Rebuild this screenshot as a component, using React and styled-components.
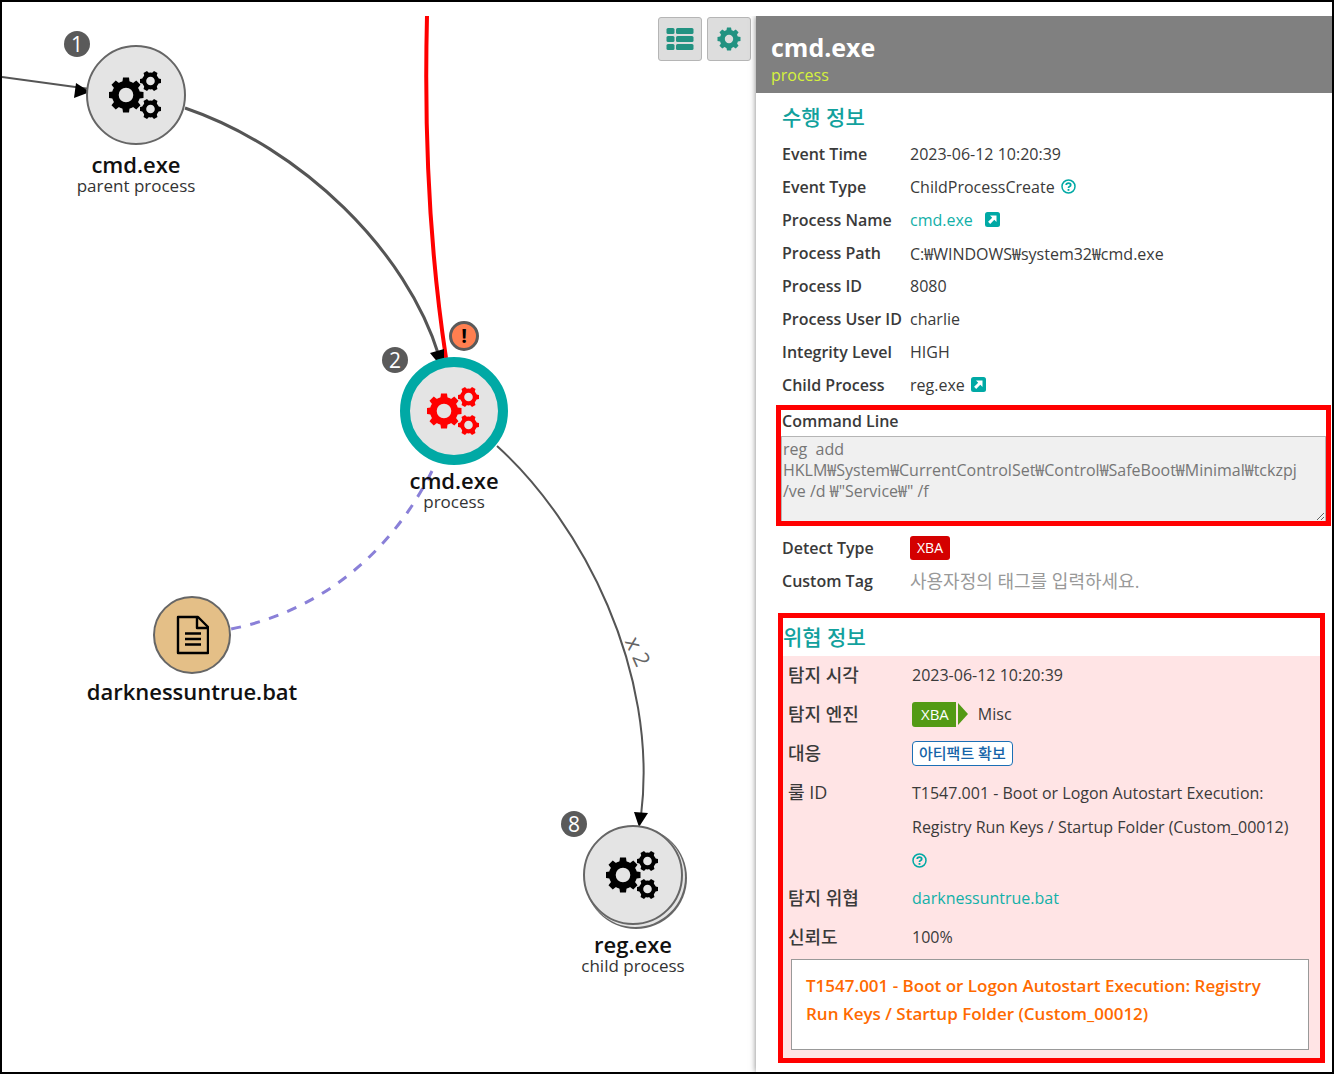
import styled, { createGlobalStyle } from "styled-components";

const sans = "'Open Sans', 'Noto Sans CJK KR', sans-serif";

const GlobalStyle = createGlobalStyle`
    * {
        box-sizing: border-box;
    }

    body {
        margin: 0;
        background: #fff;
        font-family: ${sans};
        color: #3a3a3a;
    }
`;

const Gear = ({ x, y, r, hole, teeth, tooth }) => (
    <g transform={`translate(${x} ${y})`}>
        <circle r={(r * 0.8 + hole) / 2} fill="none" stroke="currentColor" strokeWidth={r * 0.8 - hole} />
        {Array.from({ length: teeth }, (_, i) => (
            <path
                key={i}
                transform={`rotate(${(360 / teeth) * i + 90})`}
                fill="currentColor"
                d={`M${-tooth / 2 - 0.8} ${-r * 0.66}L${-tooth / 2} ${-r}H${tooth / 2}L${tooth / 2 + 0.8} ${-r * 0.66}Z`}
            />
        ))}
    </g>
);

const CogsIcon = () => (
    <svg width="54" height="50" viewBox="1 0 54 50" aria-hidden="true">
        <Gear x={18} y={25} r={17.5} hole={7.3} teeth={8} tooth={6} />
        <Gear x={42.5} y={11} r={10.5} hole={4.3} teeth={6} tooth={4} />
        <Gear x={42.5} y={39} r={10.5} hole={4.3} teeth={6} tooth={4} />
    </svg>
);

const CogIcon = () => (
    <svg width="24" height="24" viewBox="0 0 24 24" aria-hidden="true">
        <Gear x={12} y={12} r={11.5} hole={4.2} teeth={8} tooth={4} />
    </svg>
);

const ListIcon = () => (
    <svg width="28" height="24" viewBox="0 0 28 24" fill="currentColor" aria-hidden="true">
        {[1, 9, 17].map((y) => (
            <g key={y}>
                <rect x="0.500" y={y} width="8" height="6" rx="1.500" />
                <rect x="10" y={y} width="17.500" height="6" rx="1.500" />
            </g>
        ))}
    </svg>
);

const FileIcon = () => (
    <svg width="34" height="40" viewBox="-1 0 34 40" fill="none" stroke="#000" strokeWidth="2.4" strokeLinejoin="round" aria-hidden="true">
        <path d="M2 2H22L32 12V38H2Z" />
        <path d="M21 2V13H32" />
        <path d="M9 18.500H25M9 24H25M9 29.500H25" />
    </svg>
);

const HelpIcon = () => (
    <svg width="15" height="15" viewBox="0 0 15 15" fill="none" stroke="currentColor" aria-hidden="true">
        <circle cx="7.500" cy="7.500" r="6.500" strokeWidth="1.500" />
        <path d="M5.200 6Q5.300 4.200 7.500 4.200Q9.700 4.200 9.700 5.900Q9.700 6.900 8.500 7.500Q7.500 8 7.500 9" strokeWidth="1.800" />
        <path d="M7.500 10V11.800" strokeWidth="1.800" />
    </svg>
);

const ExternalIcon = () => (
    <svg width="15" height="15" viewBox="0 0 15 15" aria-hidden="true">
        <rect width="15" height="15" rx="2.500" fill="#00a9a5" />
        <path d="M5 3.500H11.500V10L9.300 7.800L5.200 11.900L3.100 9.800L7.200 5.700Z" fill="#fff" />
    </svg>
);

const nodes = [
    { id: 1, x: 134, y: 79, name: "cmd.exe", kind: "parent process", order: 1 },
    { id: 2, x: 452, y: 395, name: "cmd.exe", kind: "process", order: 2, selected: true, alert: true },
    { id: 3, x: 190, y: 619, name: "darknessuntrue.bat", file: true },
    { id: 4, x: 631, y: 859, name: "reg.exe", kind: "child process", order: 8, stacked: true },
];

const eventInfo = [
    { label: "Event Time", value: "2023-06-12 10:20:39" },
    { label: "Event Type", value: "ChildProcessCreate", help: true },
    { label: "Process Name", value: "cmd.exe", link: true, external: true },
    { label: "Process Path", value: "C:₩WINDOWS₩system32₩cmd.exe" },
    { label: "Process ID", value: "8080" },
    { label: "Process User ID", value: "charlie" },
    { label: "Integrity Level", value: "HIGH" },
    { label: "Child Process", value: "reg.exe", external: true },
];

const commandLine = 'reg  add HKLM₩System₩CurrentControlSet₩Control₩SafeBoot₩Minimal₩tckzpj /ve /d ₩"Service₩" /f';

const Edges = () => (
    <EdgeLayer aria-hidden="true">
        <g fill="none" stroke="#555" strokeWidth="2">
            <path d="M0 61L88 73" />
            <path d="M183 92C300 132 405 235 437 340" strokeWidth="3" />
            <path d="M495 430C580 507 657 655 639 800" />
        </g>
        <path d="M425 0C422 120 427 230 444 342" fill="none" stroke="red" strokeWidth="4" />
        <path d="M430 455C385 545 310 597 229 613" fill="none" stroke="#8a80d8" strokeWidth="3" strokeDasharray="10 9.6" />
        <g fill="#000">
            <path d="M74 67L88 76L72 82Z" />
            <path d="M428 337L442 333V348H437Z" />
            <path d="M632 796L646 797L637 811Z" />
        </g>
    </EdgeLayer>
);

const GraphNode = ({ node }) => (
    <NodeBox style={{ left: node.x, top: node.y }}>
        <Circle $file={node.file} $selected={node.selected} $stacked={node.stacked}>
            {node.file ? <FileIcon /> : <CogsIcon />}
            {node.order && <OrderBadge $selected={node.selected}>{node.order}</OrderBadge>}
            {node.alert && <AlertBadge>!</AlertBadge>}
        </Circle>
        <NodeText $file={node.file}>
            <NodeName>{node.name}</NodeName>
            {node.kind && <NodeKind>{node.kind}</NodeKind>}
        </NodeText>
    </NodeBox>
);

export default function App() {
    return (
        <>
            <GlobalStyle />
            <Frame>
                <Graph>
                    <Edges />
                    {nodes.map((node) => (
                        <GraphNode key={node.id} node={node} />
                    ))}
                    <EdgeLabel>x 2</EdgeLabel>
                    <Toolbar>
                        <ToolButton aria-label="List"><ListIcon /></ToolButton>
                        <ToolButton aria-label="Settings"><CogIcon /></ToolButton>
                    </Toolbar>
                </Graph>
                <Panel>
                    <PanelHeader>
                        <PanelTitle>cmd.exe</PanelTitle>
                        <PanelKind>process</PanelKind>
                    </PanelHeader>
                    <EventSection>
                        <SectionTitle>수행 정보</SectionTitle>
                        <InfoList>
                            {eventInfo.map(({ label, value, link, help, external }) => (
                                <InfoRow key={label}>
                                    <InfoLabel>{label}</InfoLabel>
                                    <InfoValue $gap={link ? 12 : 6}>
                                        {link ? <TextLink href="#process">{value}</TextLink> : value}
                                        {help && <IconButton aria-label="Help"><HelpIcon /></IconButton>}
                                        {external && <IconButton aria-label="Open"><ExternalIcon /></IconButton>}
                                    </InfoValue>
                                </InfoRow>
                            ))}
                        </InfoList>
                    </EventSection>
                    <CommandBox>
                        <CommandLabel htmlFor="command">Command Line</CommandLabel>
                        <CommandText id="command" readOnly defaultValue={commandLine} />
                    </CommandBox>
                    <TagSection>
                        <InfoRow as="div">
                            <TagLabel as="span">Detect Type</TagLabel>
                            <DetectBadge>XBA</DetectBadge>
                        </InfoRow>
                        <InfoRow as="div">
                            <TagLabel htmlFor="tag">Custom Tag</TagLabel>
                            <TagInput id="tag" placeholder="사용자정의 태그를 입력하세요." />
                        </InfoRow>
                    </TagSection>
                    <ThreatBox>
                        <ThreatTitle>위협 정보</ThreatTitle>
                        <ThreatBody>
                            <ThreatList>
                                <ThreatLabel>탐지 시각</ThreatLabel>
                                <ThreatValue>2023-06-12 10:20:39</ThreatValue>
                                <ThreatLabel>탐지 엔진</ThreatLabel>
                                <ThreatValue><EngineBadge>XBA</EngineBadge>Misc</ThreatValue>
                                <ThreatLabel>대응</ThreatLabel>
                                <ThreatValue><ArtifactButton>아티팩트 확보</ArtifactButton></ThreatValue>
                                <ThreatLabel>룰 ID</ThreatLabel>
                                <RuleValue>
                                    T1547.001 - Boot or Logon Autostart Execution: Registry Run Keys / Startup Folder (Custom_00012)
                                    <RuleHelp><IconButton aria-label="Help"><HelpIcon /></IconButton></RuleHelp>
                                </RuleValue>
                                <ThreatLabel>탐지 위협</ThreatLabel>
                                <ThreatValue><TextLink href="#threat">darknessuntrue.bat</TextLink></ThreatValue>
                                <ThreatLabel>신뢰도</ThreatLabel>
                                <ThreatValue>100%</ThreatValue>
                            </ThreatList>
                            <RuleCard>
                                T1547.001 - Boot or Logon Autostart Execution: Registry Run Keys / Startup Folder (Custom_00012)
                            </RuleCard>
                        </ThreatBody>
                    </ThreatBox>
                </Panel>
            </Frame>
        </>
    );
}

const Frame = styled.main`
    display: flex;
    min-height: 100vh;
    padding-top: 14px;
    border: 2px solid #000;
`;

const Graph = styled.section`
    position: relative;
    flex: 1;
    min-width: 0;
    overflow: hidden;
`;

const EdgeLayer = styled.svg`
    position: absolute;
    inset: 0;
    width: 100%;
    height: 100%;
`;

const NodeBox = styled.div`
    position: absolute;
    width: 0;
    height: 0;
    display: flex;
    justify-content: center;
`;

const Circle = styled.div`
    position: absolute;
    display: flex;
    align-items: center;
    justify-content: center;
    width: ${props => props.$file ? 78 : props.$selected ? 108 : 100}px;
    height: ${props => props.$file ? 78 : props.$selected ? 108 : 100}px;
    transform: translate(0, -50%);
    border-radius: 50%;
    border: ${props => props.$selected ? "10px solid #00a9a5" : "2px solid #666"};
    background: ${props => props.$file ? "#e4bf87" : "#e4e4e4"};
    color: ${props => props.$selected ? "red" : "#000"};
    box-shadow: ${props => props.$stacked ? "2px 2px 0 0 #e4e4e4, 3px 3px 0 1px #666" : "none"};
`;

const Badge = styled.span`
    position: absolute;
    display: flex;
    align-items: center;
    justify-content: center;
    border-radius: 50%;
    line-height: 1;
`;

const OrderBadge = styled(Badge)`
    top: ${props => props.$selected ? -20 : -16}px;
    left: ${props => props.$selected ? -28 : -24}px;
    width: 26px;
    height: 26px;
    background: #5a5a5a;
    color: #fff;
    font-size: 21px;
`;

const AlertBadge = styled(Badge)`
    top: -46px;
    right: 19px;
    width: 30px;
    height: 30px;
    border: 3px solid #5a5a5a;
    background: #ff7f50;
    color: #000;
    font-size: 20px;
    font-weight: bold;
`;

const NodeText = styled.div`
    position: absolute;
    top: ${props => props.$file ? 45 : 58}px;
    text-align: center;
    white-space: nowrap;
    color: #111;
`;

const NodeName = styled.div`
    font-size: 22px;
    font-weight: 600;
    line-height: 23px;
`;

const NodeKind = styled.div`
    font-size: 17px;
    line-height: 19px;
    color: #333;
`;

const EdgeLabel = styled.span`
    position: absolute;
    left: 622px;
    top: 623px;
    font-size: 22px;
    line-height: 24px;
    color: #666;
    transform: rotate(66deg);
`;

const Toolbar = styled.div`
    position: absolute;
    top: 1px;
    right: 5px;
    display: flex;
    gap: 5px;
`;

const ToolButton = styled.button`
    display: flex;
    align-items: center;
    justify-content: center;
    width: 44px;
    height: 44px;
    padding: 0;
    border: 1px solid #b5b5b5;
    border-radius: 3px;
    background: #ddd;
    color: #229281;
    cursor: pointer;
`;

const Panel = styled.aside`
    position: relative;
    width: 576px;
    background: #fff;
    box-shadow: 0 0 6px #00000080;
    clip-path: inset(0 0 0 -10px);
`;

const PanelHeader = styled.header`
    height: 77px;
    padding: 14px 15px 0;
    background: #808080;
`;

const PanelTitle = styled.h1`
    margin: 0;
    font-size: 25px;
    font-weight: 700;
    line-height: 34px;
    color: #fff;
`;

const PanelKind = styled.div`
    font-size: 16px;
    line-height: 22px;
    color: #d6f23c;
`;

const EventSection = styled.section`
    padding: 8px 26px 0;
`;

const SectionTitle = styled.h2`
    margin: 0;
    font-size: 21px;
    font-weight: 500;
    line-height: 32px;
    color: #12a19d;
`;

const InfoList = styled.dl`
    margin: 4px 0 0;
`;

const InfoRow = styled.div`
    display: grid;
    grid-template-columns: 128px 1fr;
    align-items: center;
    min-height: 33px;
`;

const InfoLabel = styled.dt`
    font-size: 16px;
    font-weight: 600;
    white-space: nowrap;
`;

const InfoValue = styled.dd`
    display: flex;
    align-items: center;
    gap: ${props => props.$gap}px;
    margin: 0;
    font-size: 16px;
`;

const TextLink = styled.a`
    color: #12b0a8;
    text-decoration: none;
`;

const IconButton = styled.button`
    display: flex;
    padding: 0;
    border: none;
    background: none;
    color: #00a9a5;
    cursor: pointer;
`;

const CommandBox = styled.section`
    display: flex;
    flex-direction: column;
    height: 121px;
    margin: 4px 1px 0 20px;
    border: 5px solid red;
    overflow: hidden;
`;

const CommandLabel = styled.label`
    flex: none;
    padding-left: 1px;
    font-size: 16px;
    font-weight: 600;
    line-height: 22px;
`;

const CommandText = styled.textarea`
    flex: none;
    height: 86px;
    margin-top: 4px;
    padding: 2px 12px 2px 1px;
    border: 1px solid #b5b5b5;
    background: #f0f0f0;
    color: #767676;
    font-family: ${sans};
    font-size: 16px;
    line-height: 21px;
    overflow: hidden;
`;

const TagSection = styled.section`
    padding: 5px 26px 0;
`;

const TagLabel = styled.label`
    font-size: 16px;
    font-weight: 600;
`;

const DetectBadge = styled.span`
    justify-self: start;
    padding: 0 7px;
    border-radius: 3px;
    background: #d40000;
    color: #fff;
    font-size: 14px;
    line-height: 24px;
`;

const TagInput = styled.input`
    padding: 0;
    border: none;
    outline: none;
    font-family: ${sans};
    font-size: 18px;

    &::placeholder {
        color: #999;
    }
`;

const ThreatBox = styled.section`
    margin: 16px 7px 0 22px;
    border: 5px solid red;
`;

const ThreatTitle = styled(SectionTitle)`
    line-height: 38px;
`;

const ThreatBody = styled.div`
    padding: 0 9px 8px 5px;
    background: #ffe4e5;
`;

const ThreatList = styled.dl`
    display: grid;
    grid-template-columns: 124px 1fr;
    margin: 0;
`;

const ThreatLabel = styled.dt`
    font-size: 18px;
    font-weight: 500;
    line-height: 39px;
`;

const ThreatValue = styled.dd`
    display: flex;
    align-items: center;
    margin: 0;
    font-size: 16px;
    line-height: 39px;
`;

const RuleValue = styled.dd`
    margin: 0;
    padding: 3px 0;
    font-size: 16px;
    line-height: 34px;
`;

const RuleHelp = styled.div`
    display: flex;
    align-items: center;
    height: 32px;
`;

const EngineBadge = styled.span`
    position: relative;
    margin-right: 22px;
    padding: 0 7px 0 9px;
    border-radius: 3px 0 0 3px;
    background: #539a15;
    color: #fff;
    font-size: 15px;
    line-height: 25px;

    &::after {
        content: "";
        position: absolute;
        top: 1px;
        left: calc(100% + 2px);
        border: solid transparent;
        border-width: 11px 0 11px 10px;
        border-left-color: #539a15;
    }
`;

const ArtifactButton = styled.button`
    padding: 0 6px;
    border: 1px solid #1c6fb5;
    border-radius: 4px;
    background: #fff;
    color: #1563a8;
    font-family: ${sans};
    font-size: 15px;
    font-weight: 500;
    line-height: 23px;
    cursor: pointer;
`;

const RuleCard = styled.div`
    min-height: 91px;
    margin: 2px 2px 0 3px;
    padding: 12px 20px 12px 14px;
    border: 1px solid #999;
    background: #fff;
    color: #ff6a00;
    font-size: 17px;
    font-weight: 600;
    line-height: 28px;
`;
